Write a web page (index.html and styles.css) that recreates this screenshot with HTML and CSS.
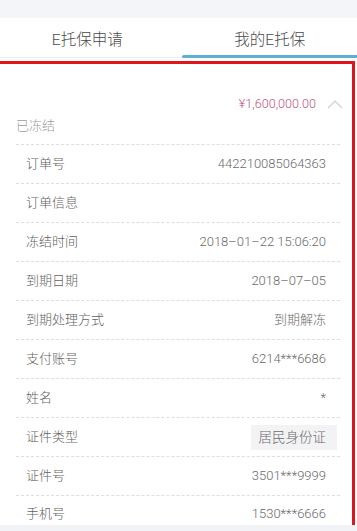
FILE: index.html
```html
<!DOCTYPE html>
<html lang="zh-CN">
<head>
<meta charset="utf-8">
<title>我的E托保</title>
<link rel="stylesheet" href="styles.css">
</head>
<body>
<div class="topband"></div>
<nav class="tabs">
  <div class="tab">E托保申请</div>
  <div class="tab active">我的E托保</div>
</nav>
<section class="panel">
  <div class="summary">
    <div class="amount-row">
      <span class="amount">¥1,600,000.00</span>
      <svg class="chevron" width="16" height="9" viewBox="0 0 16 9"><polyline points="1,8 8,1 15,8" fill="none" stroke="#cfcfd2" stroke-width="1.1"/></svg>
    </div>
    <div class="status">已冻结</div>
  </div>
  <ul class="rows">
    <li class="row"><span class="label">订单号</span><span class="value">442210085064363</span></li>
    <li class="row"><span class="label">订单信息</span><span class="value"></span></li>
    <li class="row"><span class="label">冻结时间</span><span class="value">2018–01–22 15:06:20</span></li>
    <li class="row"><span class="label">到期日期</span><span class="value">2018–07–05</span></li>
    <li class="row"><span class="label">到期处理方式</span><span class="value">到期解冻</span></li>
    <li class="row"><span class="label">支付账号</span><span class="value">6214***6686</span></li>
    <li class="row"><span class="label">姓名</span><span class="value">*</span></li>
    <li class="row"><span class="label">证件类型</span><span class="value tag">居民身份证</span></li>
    <li class="row"><span class="label">证件号</span><span class="value">3501***9999</span></li>
    <li class="row last"><span class="label">手机号</span><span class="value">1530***6666</span></li>
  </ul>
</section>
<div class="footband"></div>
</body>
</html>
```

FILE: styles.css
```css
html, body {
  margin: 0;
  padding: 0;
  background: #ffffff;
  overflow: hidden;
}
body {
  font-family: "Roboto", "Liberation Sans", "Noto Sans CJK SC", sans-serif;
  font-weight: 300;
  width: 357px;
  color: #666;
}
.topband {
  height: 18px;
  background: #f4f5f9;
}
.tabs {
  display: flex;
  height: 39px;
  border-bottom: 1px solid #eceef3;
  background: #fff;
}
.tab {
  flex: 1;
  display: flex;
  align-items: center;
  justify-content: center;
  font-size: 15.5px;
  color: #4a4a4a;
  position: relative;
}
.tab:first-child {
  padding-right: 8px;
}
.tab.active::after {
  content: "";
  position: absolute;
  left: -1px;
  right: 0;
  bottom: -1px;
  height: 3px;
  background: #5db0d5;
  border-radius: 2px 0 0 2px;
}
.panel {
  margin-top: 3px;
  width: 352px;
  border-top: 3px solid #e1141b;
  border-right: 3px solid #e1141b;
}
.summary {
  padding-top: 32px;
  padding-bottom: 8px;
}
.amount-row {
  display: flex;
  justify-content: flex-end;
  align-items: center;
  height: 16px;
  padding-right: 9px;
  gap: 11px;
}
.amount {
  font-size: 12.6px;
  color: #c4527c;
  line-height: 16px;
}
.chevron {
  display: block;
}
.status {
  margin-top: 4px;
  margin-left: 16px;
  font-size: 13px;
  line-height: 20px;
  color: #9c9c9c;
}
.rows {
  list-style: none;
  margin: 0 12px 0 16px;
  padding: 0;
}
.row {
  border-top: 1px dashed #dedede;
  height: 38px;
  display: flex;
  align-items: center;
  justify-content: space-between;
  padding: 0 14px 0 10px;
  font-size: 13px;
  line-height: 20px;
}
.row.last {
  height: 30px;
  align-items: flex-start;
  padding-top: 8px;
  box-sizing: border-box;
}
.label {
  color: #626262;
}
.value {
  color: #6a6a6a;
}
.tag {
  background: #f3f3f6;
  padding: 3px 11px 3px 8px;
  margin-right: -11px;
  line-height: 19px;
  font-size: 13.5px;
}
.footband {
  height: 12px;
  background: #f2f3f6;
}
```
